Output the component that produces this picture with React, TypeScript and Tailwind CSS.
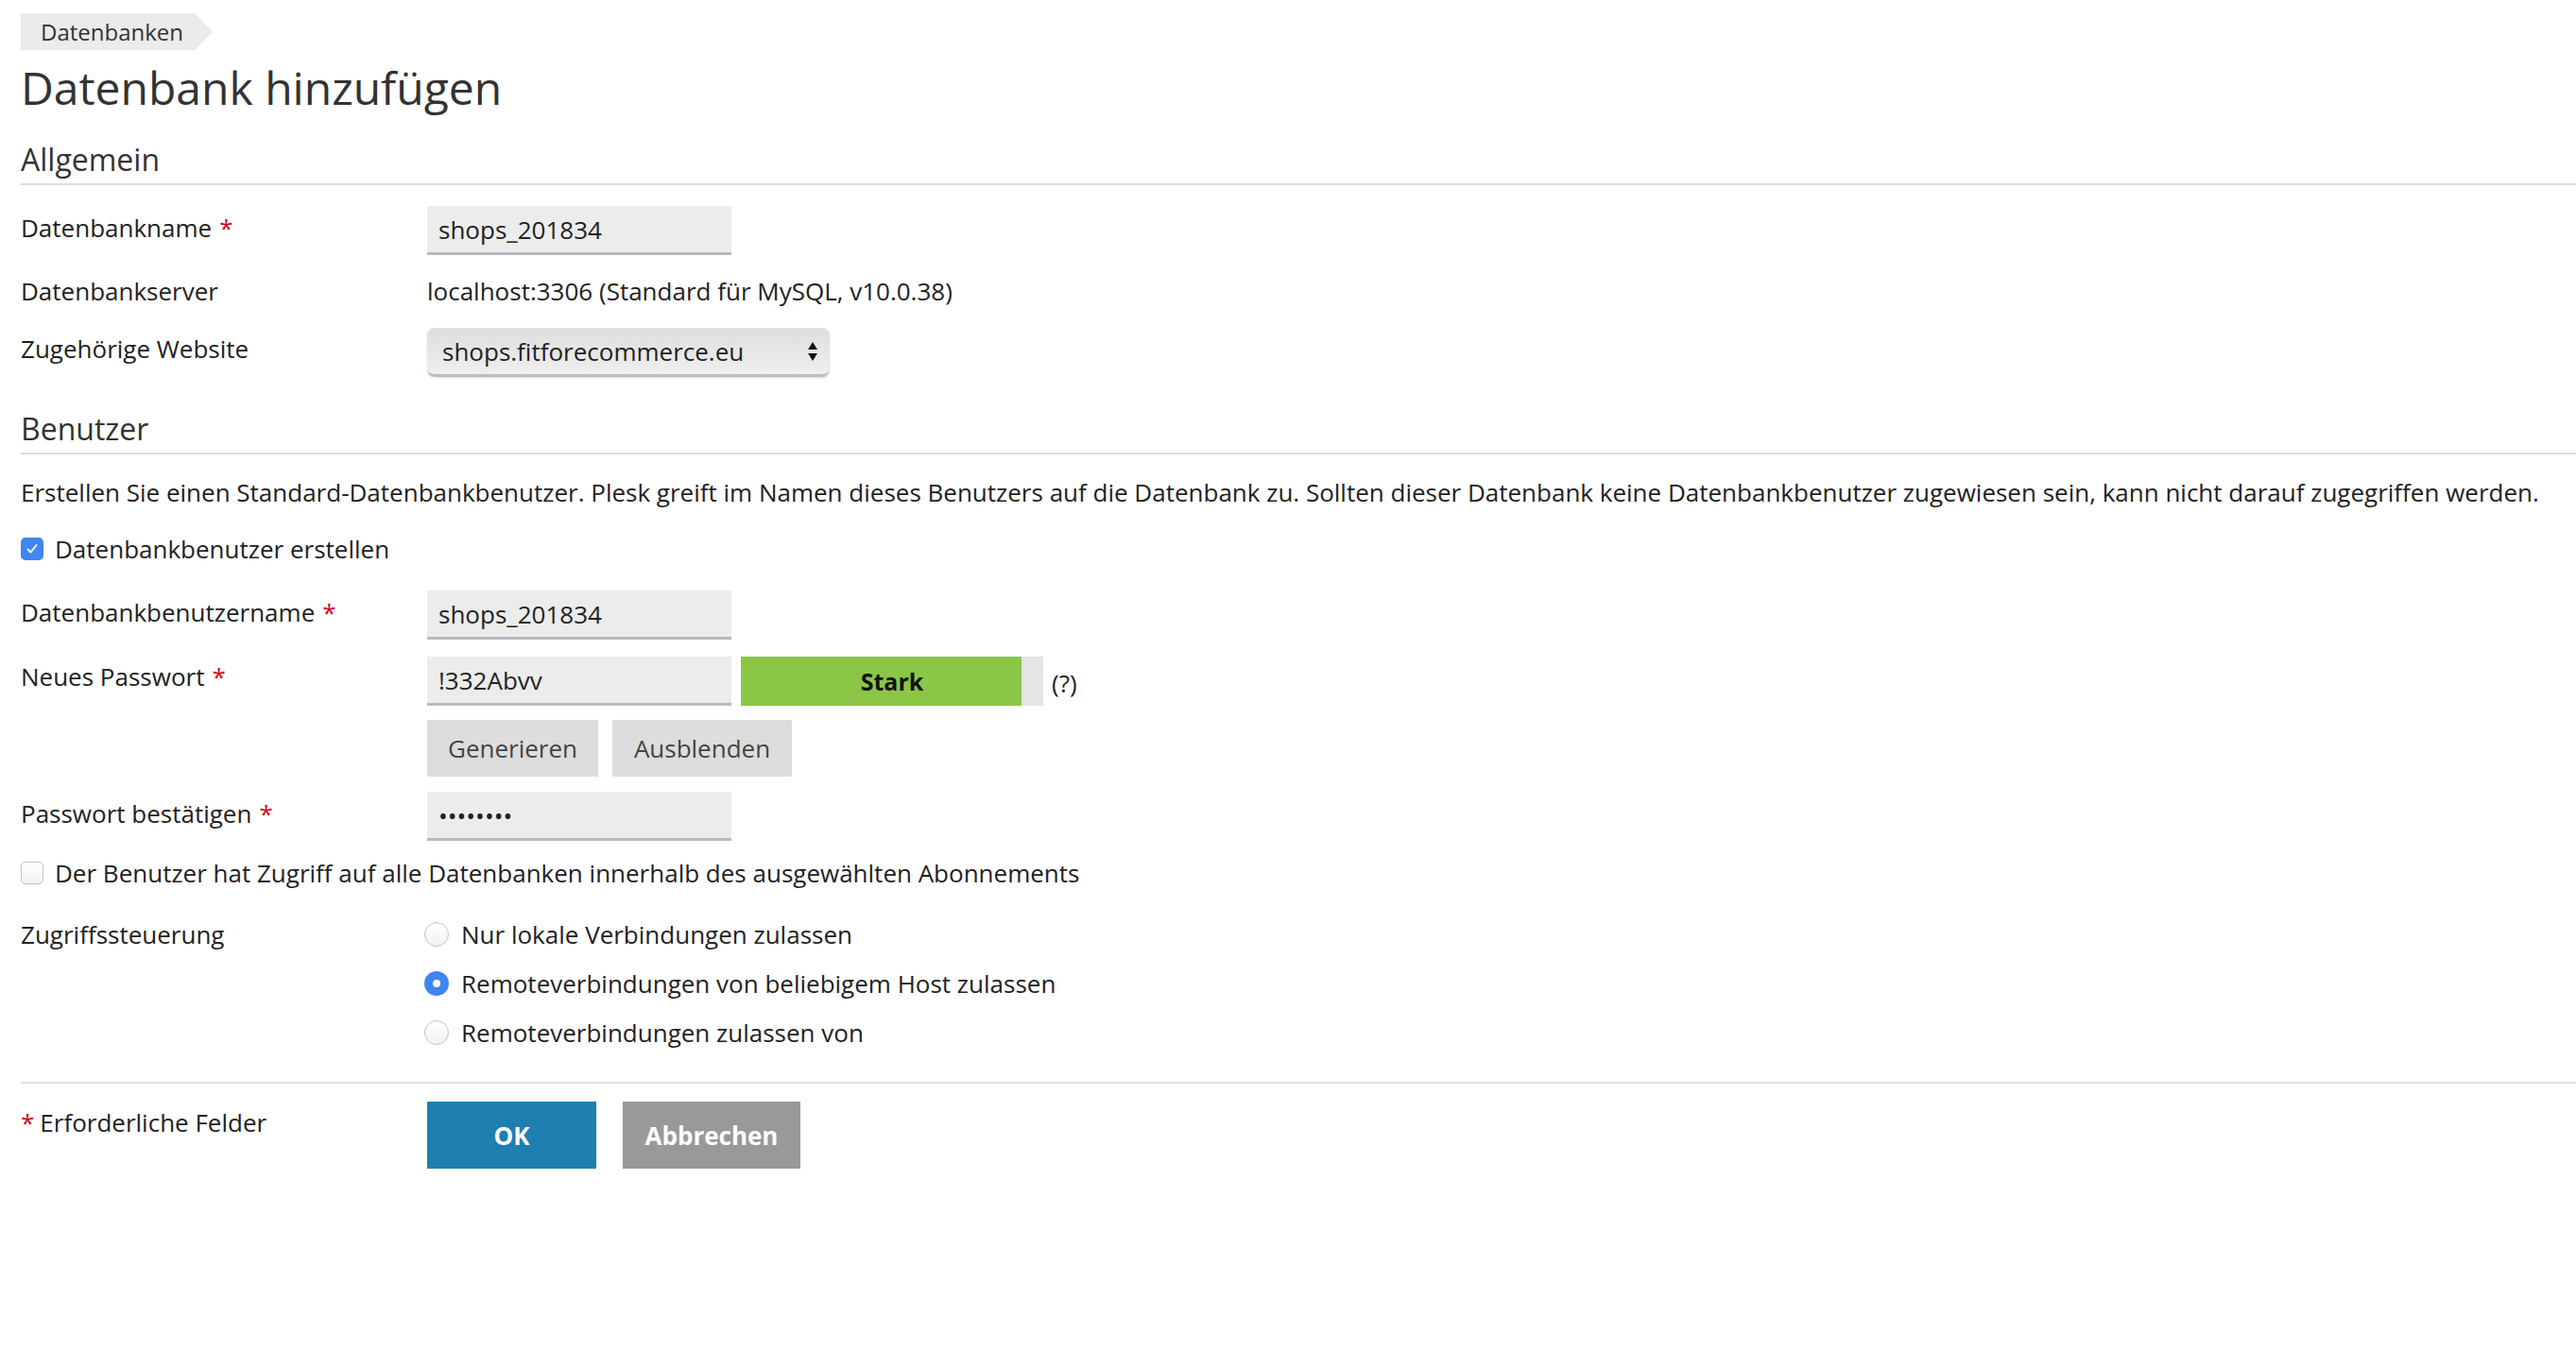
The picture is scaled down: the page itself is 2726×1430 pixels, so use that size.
import React from 'react';

const font = { fontFamily: '"Open Sans", "Liberation Sans", sans-serif' };

function Req() {
  return <span className="text-[#d0021b] ml-[8px]">*</span>;
}

function TextField({ value }: { value: string }) {
  return (
    <div className="w-[322px] h-[52px] bg-[#ececec] border-b-[3px] border-[#b3bbc2] pl-[12px] flex items-center text-[26px] text-[#222]">
      {value}
    </div>
  );
}

function Radio({ checked, label }: { checked?: boolean; label: string }) {
  return (
    <div className="flex items-center h-[36px]">
      {checked ? (
        <span className="w-[26px] h-[26px] rounded-full bg-[#3f86f0] flex items-center justify-center shrink-0 ml-[-3px]">
          <span className="w-[8px] h-[8px] rounded-full bg-white" />
        </span>
      ) : (
        <span className="w-[26px] h-[26px] rounded-full border-[1.5px] border-[#c4c4c4] bg-gradient-to-b from-white to-[#f2f2f2] shrink-0 ml-[-3px]" />
      )}
      <span className="ml-[13px]">{label}</span>
    </div>
  );
}

function Heading({ children }: { children: React.ReactNode }) {
  return (
    <div className="text-[32px] leading-[44px] text-[#333] pb-[3px] border-b-2 border-[#dcdcdc]">
      {children}
    </div>
  );
}

export default function App() {
  return (
    <div className="min-h-[1430px] bg-white text-[#222] text-[26px] leading-[36px]" style={font}>
      <div className="pl-[22px] pt-[14px]">
        {/* Breadcrumb */}
        <div className="flex items-stretch h-[39px]">
          <div className="bg-[#ebebeb] pl-[21px] pr-[12px] flex items-center text-[24px] text-[#333]">Datenbanken</div>
          <svg width="19" height="39" viewBox="0 0 19 39" className="block">
            <polygon points="0,0 0,39 19,19.5" fill="#ebebeb" />
          </svg>
        </div>

        <h1 className="text-[48px] leading-[60px] text-[#333] mt-[10px]">Datenbank hinzufügen</h1>

        <div className="mt-[24px]">
          <Heading>Allgemein</Heading>
        </div>

        {/* Allgemein rows */}
        <div className="flex items-start mt-[22px]">
          <div className="w-[430px] pt-[5px]">Datenbankname<Req /></div>
          <TextField value="shops_201834" />
        </div>
        <div className="flex items-start mt-[20px]">
          <div className="w-[430px]">Datenbankserver</div>
          <div>localhost:3306 (Standard für MySQL, v10.0.38)</div>
        </div>
        <div className="flex items-start mt-[21px]">
          <div className="w-[430px] pt-[4px]">Zugehörige Website</div>
          <div className="w-[426px] h-[52px] rounded-[8px] bg-gradient-to-b from-[#dedede] to-[#efefef] border-b-[3px] border-[#b6c0c8] shadow-[0_1px_2px_rgba(0,0,0,0.15)] pl-[16px] pr-[12px] flex items-center justify-between">
            <span>shops.fitforecommerce.eu</span>
            <svg width="12" height="22" viewBox="0 0 12 22">
              <polygon points="6,1 11,9 1,9" fill="#111" />
              <polygon points="1,13 11,13 6,21" fill="#111" />
            </svg>
          </div>
        </div>

        <div className="mt-[33px]">
          <Heading>Benutzer</Heading>
        </div>

        <p className="mt-[22px] whitespace-nowrap">
          Erstellen Sie einen Standard-Datenbankbenutzer. Plesk greift im Namen dieses Benutzers auf die Datenbank zu. Sollten dieser Datenbank keine Datenbankbenutzer zugewiesen sein, kann nicht darauf zugegriffen werden.
        </p>

        <div className="flex items-center mt-[24px]">
          <span className="w-[24px] h-[24px] rounded-[5px] bg-[#3f86f0] flex items-center justify-center">
            <svg width="14" height="14" viewBox="0 0 14 14">
              <path d="M2.5 7.5 L5.5 10.5 L11.5 3" stroke="white" strokeWidth="2" fill="none" strokeLinecap="round" strokeLinejoin="round" />
            </svg>
          </span>
          <span className="ml-[12px]">Datenbankbenutzer erstellen</span>
        </div>

        <div className="flex items-start mt-[26px]">
          <div className="w-[430px] pt-[5px]">Datenbankbenutzername<Req /></div>
          <TextField value="shops_201834" />
        </div>

        <div className="flex items-start mt-[18px]">
          <div className="w-[430px] pt-[3px]">Neues Passwort<Req /></div>
          <div className="flex flex-col">
            <div className="flex items-center">
              <TextField value="!332Abvv" />
              {/* strength meter: fill bar with label centered over the whole track */}
              <div className="relative ml-[10px] w-[320px] h-[52px] bg-[#e5e5e5] flex items-center justify-center">
                <div className="absolute left-0 top-0 w-[297px] h-full bg-[#8bc646]" />
                <span className="relative text-[25px] font-bold text-[#111]">Stark</span>
              </div>
              <span className="ml-[9px] mt-[4px]">(?)</span>
            </div>
            <div className="flex gap-[15px] mt-[15px]">
              <button className="w-[181px] h-[60px] bg-[#dddddd] text-[#444] text-[26px]">Generieren</button>
              <button className="w-[190px] h-[60px] bg-[#dddddd] text-[#444] text-[26px]">Ausblenden</button>
            </div>
          </div>
        </div>

        <div className="flex items-start mt-[16px]">
          <div className="w-[430px] pt-[5px]">Passwort bestätigen<Req /></div>
          <TextField value="••••••••" />
        </div>

        <div className="flex items-center mt-[16px]">
          <span className="w-[24px] h-[24px] rounded-[5px] border-[1.5px] border-[#c4c4c4] bg-gradient-to-b from-white to-[#f2f2f2]" />
          <span className="ml-[12px]">Der Benutzer hat Zugriff auf alle Datenbanken innerhalb des ausgewählten Abonnements</span>
        </div>

        <div className="flex items-start mt-[29px]">
          <div className="w-[430px]">Zugriffssteuerung</div>
          <div className="flex flex-col gap-[16px]">
            <Radio label="Nur lokale Verbindungen zulassen" />
            <Radio checked label="Remoteverbindungen von beliebigem Host zulassen" />
            <Radio label="Remoteverbindungen zulassen von" />
          </div>
        </div>

        <div className="mt-[34px] border-t-2 border-[#dcdcdc]" />

        <div className="flex items-start mt-[19px]">
          <div className="w-[430px] pt-[4px]">
            <span className="text-[#d0021b] mr-[6px]">*</span>Erforderliche Felder
          </div>
          <div className="flex gap-[28px]">
            <button className="w-[179px] h-[71px] bg-[#1e80b0] text-white font-bold text-[26px]">OK</button>
            <button className="w-[188px] h-[71px] bg-[#999999] text-white font-bold text-[26px]">Abbrechen</button>
          </div>
        </div>
      </div>
    </div>
  );
}
